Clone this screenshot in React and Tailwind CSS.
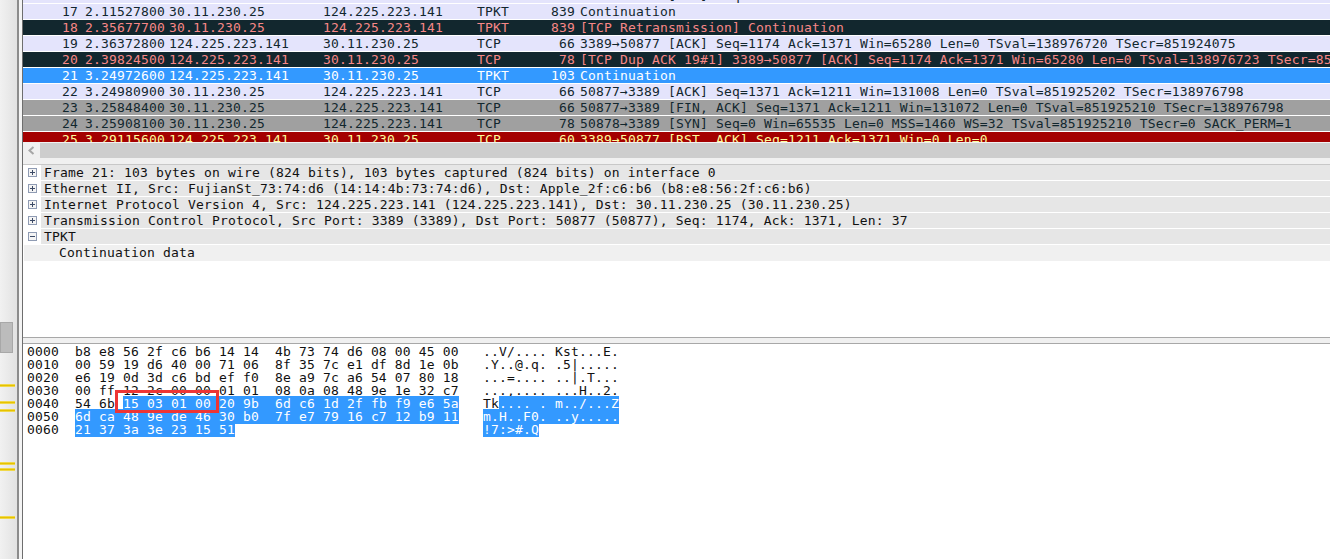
const rowStyles = {
  tcp: 'bg-[#e4e4fc] text-[#12272e]',
  dark: 'bg-[#12272e] text-[#f78787]',
  selected: 'bg-[#3399ff] text-white',
  gray: 'bg-[#a0a0a0] text-[#12272e]',
  red: 'bg-[#a40000] text-[#fffc9c]',
};

const packets = [
  { no: 16, time: '2.11500000', src: '124.225.223.141', dst: '30.11.230.25', proto: 'TCP', len: 66, info: '3389→50877 [ACK] Seq=1174 Ack=1371 Win=65280 Len=0', kind: 'tcp' },
  { no: 17, time: '2.11527800', src: '30.11.230.25', dst: '124.225.223.141', proto: 'TPKT', len: 839, info: 'Continuation', kind: 'tcp' },
  { no: 18, time: '2.35677700', src: '30.11.230.25', dst: '124.225.223.141', proto: 'TPKT', len: 839, info: '[TCP Retransmission] Continuation', kind: 'dark' },
  { no: 19, time: '2.36372800', src: '124.225.223.141', dst: '30.11.230.25', proto: 'TCP', len: 66, info: '3389→50877 [ACK] Seq=1174 Ack=1371 Win=65280 Len=0 TSval=138976720 TSecr=851924075', kind: 'tcp' },
  { no: 20, time: '2.39824500', src: '124.225.223.141', dst: '30.11.230.25', proto: 'TCP', len: 78, info: '[TCP Dup ACK 19#1] 3389→50877 [ACK] Seq=1174 Ack=1371 Win=65280 Len=0 TSval=138976723 TSecr=851924075', kind: 'dark' },
  { no: 21, time: '3.24972600', src: '124.225.223.141', dst: '30.11.230.25', proto: 'TPKT', len: 103, info: 'Continuation', kind: 'selected' },
  { no: 22, time: '3.24980900', src: '30.11.230.25', dst: '124.225.223.141', proto: 'TCP', len: 66, info: '50877→3389 [ACK] Seq=1371 Ack=1211 Win=131008 Len=0 TSval=851925202 TSecr=138976798', kind: 'tcp' },
  { no: 23, time: '3.25848400', src: '30.11.230.25', dst: '124.225.223.141', proto: 'TCP', len: 66, info: '50877→3389 [FIN, ACK] Seq=1371 Ack=1211 Win=131072 Len=0 TSval=851925210 TSecr=138976798', kind: 'gray' },
  { no: 24, time: '3.25908100', src: '30.11.230.25', dst: '124.225.223.141', proto: 'TCP', len: 78, info: '50878→3389 [SYN] Seq=0 Win=65535 Len=0 MSS=1460 WS=32 TSval=851925210 TSecr=0 SACK_PERM=1', kind: 'gray' },
  { no: 25, time: '3.29115600', src: '124.225.223.141', dst: '30.11.230.25', proto: 'TCP', len: 60, info: '3389→50877 [RST, ACK] Seq=1211 Ack=1371 Win=0 Len=0', kind: 'red' },
];

const details = [
  'Frame 21: 103 bytes on wire (824 bits), 103 bytes captured (824 bits) on interface 0',
  'Ethernet II, Src: FujianSt_73:74:d6 (14:14:4b:73:74:d6), Dst: Apple_2f:c6:b6 (b8:e8:56:2f:c6:b6)',
  'Internet Protocol Version 4, Src: 124.225.223.141 (124.225.223.141), Dst: 30.11.230.25 (30.11.230.25)',
  'Transmission Control Protocol, Src Port: 3389 (3389), Dst Port: 50877 (50877), Seq: 1174, Ack: 1371, Len: 37',
];

// hex/ascii = before the selection, hexSel/asciiSel = selected part
const hexRows = [
  { off: '0000', hex: 'b8 e8 56 2f c6 b6 14 14  4b 73 74 d6 08 00 45 00', ascii: '..V/.... Kst...E.' },
  { off: '0010', hex: '00 59 19 d6 40 00 71 06  8f 35 7c e1 df 8d 1e 0b', ascii: '.Y..@.q. .5|.....' },
  { off: '0020', hex: 'e6 19 0d 3d c6 bd ef f0  8e a9 7c a6 54 07 80 18', ascii: '...=.... ..|.T...' },
  { off: '0030', hex: '00 ff 12 2c 00 00 01 01  08 0a 08 48 9e 1e 32 c7', ascii: '...,.... ...H..2.' },
  { off: '0040', hex: '54 6b ', hexSel: '15 03 01 00 20 9b  6d c6 1d 2f fb f9 e6 5a', ascii: 'Tk', asciiSel: '.... . m../...Z' },
  { off: '0050', hex: '', hexSel: '6d ca 48 9e de 46 30 b0  7f e7 79 16 c7 12 b9 11', ascii: '', asciiSel: 'm.H..F0. ..y.....' },
  { off: '0060', hex: '', hexSel: '21 37 3a 3e 23 15 51', ascii: '', asciiSel: '!7:>#.Q' },
];

const ticks = ['top-[384px]', 'top-[401px]', 'top-[409px]', 'top-[462px]', 'top-[468px]', 'top-[516px]'];

const Expander = ({ open }) => (
  <span className="w-[9px] h-[9px] border border-[#8f9bb3] bg-[#f4f4f4] flex items-center justify-center shrink-0">
    <span className="relative w-[5px] h-[1px] bg-[#3c4a66]">
      {!open && <span className="absolute left-[2px] top-[-2px] w-[1px] h-[5px] bg-[#3c4a66]" />}
    </span>
  </span>
);

const PacketRow = ({ p }) => (
  <div className={`flex h-[15px] mb-[1px] shrink-0 items-center whitespace-pre ${rowStyles[p.kind]}`}>
    <span className="w-[55px] shrink-0 text-right">{p.no}</span>
    <span className="w-[91px] shrink-0 pl-[7px]">{p.time}</span>
    <span className="w-[154px] shrink-0">{p.src}</span>
    <span className="w-[154px] shrink-0">{p.dst}</span>
    <span className="w-[98px] shrink-0 flex justify-between">
      <span>{p.proto}</span>
      <span>{p.len}</span>
    </span>
    <span className="pl-[5px] shrink-0">{p.info}</span>
  </div>
);

const App = () => {
  return (
    <div className="flex h-[559px] w-[1330px] overflow-hidden bg-white text-[13px] leading-[16px] tracking-[0.17px] text-[#111] font-['DejaVu_Sans_Mono',monospace]">
      {/* Left strip with overview marks */}
      <div className="relative w-[17px] shrink-0 bg-gradient-to-r from-[#f1f1f1] to-[#e2e2e2]">
        <div className="absolute left-0 top-[322px] w-[13px] h-[31px] bg-[#bcbcbc] border border-[#a8a8a8]" />
        {ticks.map((t) => (
          <div key={t} className={`absolute left-0 w-[15px] h-[3px] bg-[#e6c200] border-y border-[#f0d84a] ${t}`} />
        ))}
      </div>
      <div className="w-[2px] shrink-0 bg-[#8c8c8c]" />
      <div className="w-[3px] shrink-0 bg-[#f4f4f4]" />
      <div className="w-[1px] shrink-0 bg-[#6e6e6e]" />

      <div className="flex-1 min-w-0 flex flex-col">
        {/* Packet list */}
        <div className="h-[142px] shrink-0 overflow-hidden flex flex-col">
          <div className="flex flex-col mt-[-12px]">
            {packets.map((p) => <PacketRow key={p.no} p={p} />)}
          </div>
        </div>

        {/* Horizontal scrollbar */}
        <div className="h-[22px] shrink-0 bg-[#f0f0f0] pt-[1px]">
          <div className="flex h-[15px]">
            <div className="w-[17px] flex items-center justify-center">
              <svg width="7" height="9" viewBox="0 0 7 9" className="text-[#a6a6a6]">
                <path d="M5.5 1 L1.5 4.5 L5.5 8" fill="none" stroke="currentColor" strokeWidth="2" />
              </svg>
            </div>
            <div className="flex-1 bg-[#cdcdcd]" />
          </div>
        </div>

        {/* Packet details */}
        <div className="h-[173px] shrink-0 border-t border-[#c8c8c8] bg-white overflow-hidden pl-[1px]">
          {details.map((d) => (
            <div key={d} className="flex items-center h-[15px] mb-[1px] whitespace-pre">
              <div className="w-[17px] flex justify-end pr-[4px]"><Expander /></div>
              <div className="flex-1 h-full bg-[#e6e6e6] pl-[3px] leading-[15px]">{d}</div>
            </div>
          ))}
          <div className="flex items-center h-[15px] mb-[1px]">
            <div className="w-[17px] flex justify-end pr-[4px]"><Expander open /></div>
            <div className="flex-1 h-full bg-[#e6e6e6] pl-[3px] leading-[15px]">TPKT</div>
          </div>
          <div className="h-[16px] bg-[#f0f0f0] pl-[35px] leading-[15px]">Continuation data</div>
        </div>

        {/* Splitter */}
        <div className="h-[7px] shrink-0 bg-[#f0f0f0] border-y border-[#a8a8a8]" />

        {/* Packet bytes */}
        <div className="relative flex-1 pt-[1px] pl-[4px] leading-[13px] whitespace-pre">
          {hexRows.map((r) => (
            <div key={r.off} className="flex h-[13px]">
              <span className="w-[48px] shrink-0">{r.off}</span>
              <span className="w-[408px] shrink-0">
                {r.hex}
                {r.hexSel && <span className="bg-[#3399ff] text-white">{r.hexSel}</span>}
              </span>
              <span>
                {r.ascii}
                {r.asciiSel && <span className="bg-[#3399ff] text-white">{r.asciiSel}</span>}
              </span>
            </div>
          ))}
          {/* Red annotation box */}
          <div className="absolute left-[92px] top-[46px] w-[104px] h-[23px] border-[3px] border-[#ee3535]" />
        </div>
      </div>
    </div>
  );
};

export default App;
